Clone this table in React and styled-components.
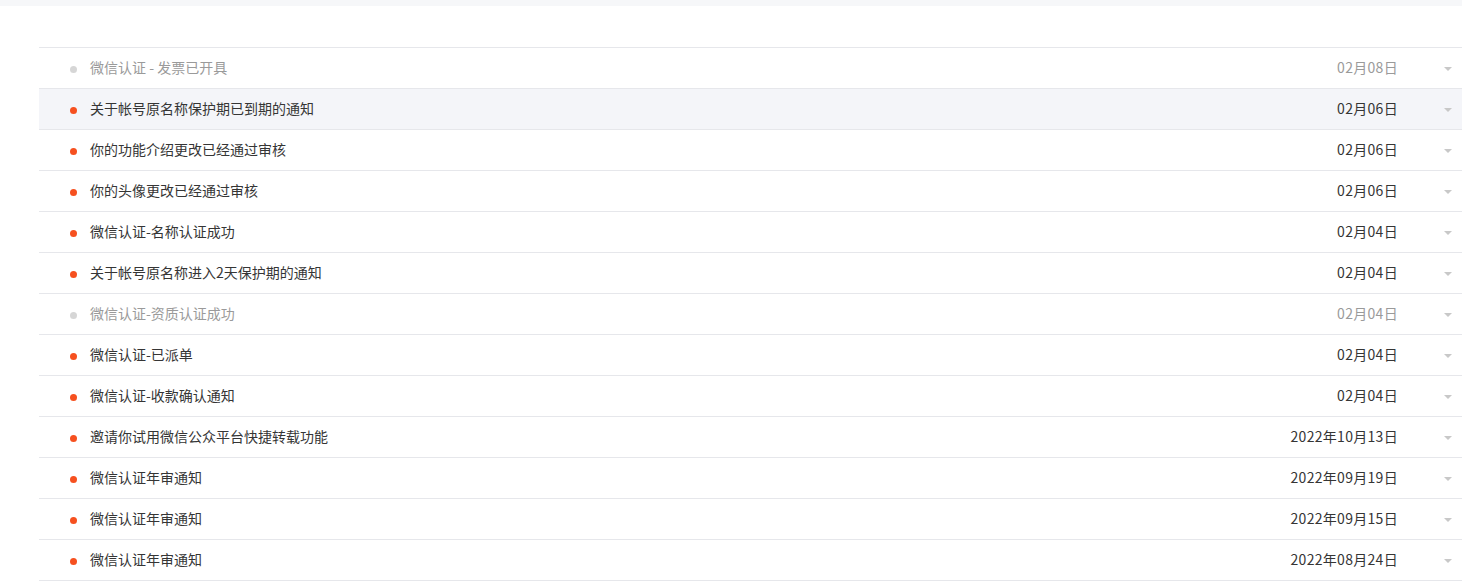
import styled, { createGlobalStyle } from "styled-components";

const GlobalStyle = createGlobalStyle`
  body {
    margin: 0;
    background: #fff;
    font-family: "Noto Sans CJK SC", "Noto Sans", sans-serif;
  }
`;

const TopBar = styled.div`
  height: 6px;
  background: #f6f7f9;
`;

const Page = styled.div`
  padding: 41px 0 0 39px;
`;

const List = styled.ul`
  list-style: none;
  margin: 0;
  padding: 0;
  border-top: 1px solid #e6e7eb;
`;

const Row = styled.li`
  display: flex;
  align-items: center;
  height: 38px;
  padding: 0 10px 2px 31px;
  border-bottom: 1px solid #e6e7eb;
  background: ${props => (props.active ? "#f4f5f9" : "#fff")};
  font-size: 14px;
  color: ${props => (props.read ? "#9a9a9a" : "#353535")};
`;

const Dot = styled.span`
  width: 7px;
  height: 7px;
  border-radius: 50%;
  flex-shrink: 0;
  background: ${props => (props.read ? "#d6d6d6" : "#f6501f")};
  margin-right: 13px;
  margin-top: 4px;
`;

const Title = styled.span`
  flex: 1;
  white-space: nowrap;
`;

const DateText = styled.span`
  white-space: nowrap;
  letter-spacing: 0.3px;
`;

const Caret = styled.span`
  width: 0;
  height: 0;
  border-left: 4px solid transparent;
  border-right: 4px solid transparent;
  border-top: 4px solid #c8c8c8;
  margin-left: 46px;
  margin-top: 3px;
`;

const items = [
  { title: "微信认证 - 发票已开具", date: "02月08日", read: true },
  { title: "关于帐号原名称保护期已到期的通知", date: "02月06日", active: true },
  { title: "你的功能介绍更改已经通过审核", date: "02月06日" },
  { title: "你的头像更改已经通过审核", date: "02月06日" },
  { title: "微信认证-名称认证成功", date: "02月04日" },
  { title: "关于帐号原名称进入2天保护期的通知", date: "02月04日" },
  { title: "微信认证-资质认证成功", date: "02月04日", read: true },
  { title: "微信认证-已派单", date: "02月04日" },
  { title: "微信认证-收款确认通知", date: "02月04日" },
  { title: "邀请你试用微信公众平台快捷转载功能", date: "2022年10月13日" },
  { title: "微信认证年审通知", date: "2022年09月19日" },
  { title: "微信认证年审通知", date: "2022年09月15日" },
  { title: "微信认证年审通知", date: "2022年08月24日" },
];

export default function App() {
  return (
    <>
      <GlobalStyle />
      <TopBar />
      <Page>
        <List>
          {items.map((item, i) => (
            <Row key={i} read={item.read} active={item.active}>
              <Dot read={item.read} />
              <Title>{item.title}</Title>
              <DateText>{item.date}</DateText>
              <Caret />
            </Row>
          ))}
        </List>
      </Page>
    </>
  );
}
